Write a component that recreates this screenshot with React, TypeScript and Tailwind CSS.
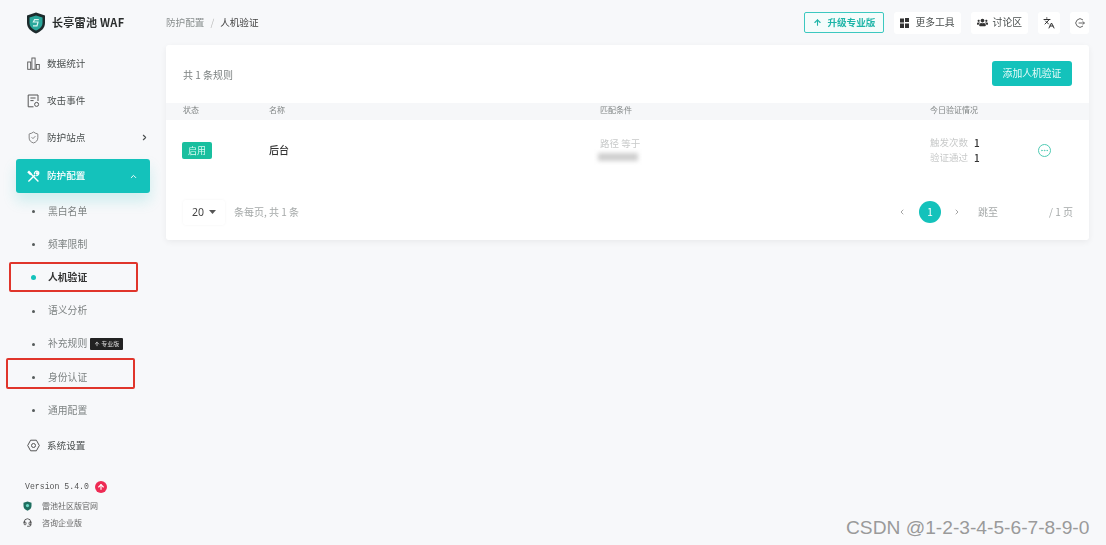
import React from 'react';
import { ChevronLeft, ChevronRight, ChevronUp, Ellipsis, Headset, Languages, ShieldCheck, ArrowUp } from 'lucide-react';
import { FaUsers } from 'react-icons/fa';

const subItems = [
  { label: '黑白名单' },
  { label: '频率限制' },
  { label: '人机验证', active: true },
  { label: '语义分析' },
  { label: '补充规则', pro: true },
  { label: '身份认证' },
  { label: '通用配置' },
];

const Logo = () => (
  <svg width="20" height="22" viewBox="0 0 20 22">
    <path d="M10 0.5 L19 3.5 V11 C19 16 15 19.5 10 21.5 C5 19.5 1 16 1 11 V3.5 Z" fill="#1d2b2c" />
    <path d="M10 3.5 L16.5 5.6 V11 C16.5 14.6 13.6 17 10 18.6 C6.4 17 3.5 14.6 3.5 11 V5.6 Z" fill="#2aa79b" />
    <path d="M12.8 7.6 H8.6 L7.4 10 H12 L11 13.8 H7" fill="none" stroke="#d9f5f1" strokeWidth="1.2" />
  </svg>
);

const BarsIcon = () => (
  <svg width="13" height="13" viewBox="0 0 13 13" fill="none" stroke="#555" strokeWidth="0.9">
    <rect x="0.7" y="5" width="3" height="7.3" />
    <rect x="4.9" y="1" width="3.2" height="11.3" />
    <rect x="9.3" y="7.5" width="3" height="4.8" />
  </svg>
);

const FileIcon = () => (
  <svg width="13" height="14" viewBox="0 0 13 14" fill="none" stroke="#555" strokeWidth="1">
    <path d="M6.5 12.8 H1.2 V1 H11 V7" />
    <path d="M3.4 4 H8.6 M3.4 6.6 H6.6" />
    <circle cx="9.6" cy="10.4" r="2" />
  </svg>
);

const ToolsIcon = () => (
  <svg width="13" height="13" viewBox="0 0 13 13" fill="none" stroke="#fff" strokeWidth="1.4">
    <path d="M1.4 11.6 L8 5" />
    <path d="M7.4 4.4 A2.6 2.6 0 0 1 11 1.4 L9.2 3.2 L10 4.2 L11.8 2.4 A2.6 2.6 0 0 1 8.6 5.6" strokeWidth="1.1" />
    <path d="M2 1.4 L4 3.4 L3.2 4.2 L1.2 2.2 Z M3.8 3.8 L11.4 11.4" />
  </svg>
);

const GearIcon = () => (
  <svg width="13" height="13" viewBox="0 0 13 13" fill="none" stroke="#555" strokeWidth="1">
    <path d="M3.6 1.2 H9.4 L12.3 6.5 L9.4 11.8 H3.6 L0.7 6.5 Z" />
    <circle cx="6.5" cy="6.5" r="2" />
  </svg>
);

const GridIcon = () => (
  <svg width="9" height="10" viewBox="0 0 9 10" fill="#333" className="mr-[6px]">
    <rect x="0" y="0.5" width="4" height="4" />
    <rect x="5" y="0" width="4" height="4" />
    <rect x="0" y="5.5" width="4" height="4.5" />
    <rect x="5" y="5.5" width="4" height="4.5" />
  </svg>
);

const ExitIcon = () => (
  <svg width="10" height="10" viewBox="0 0 10 10" fill="none" stroke="#555" strokeWidth="0.9">
    <path d="M8 2 A4.2 4.2 0 1 0 8 8" />
    <path d="M3.6 5 H9.4 M7.8 3.4 L9.4 5 L7.8 6.6" />
  </svg>
);

const NavItem = ({ icon, label, right }: { icon: React.ReactNode; label: string; right?: React.ReactNode }) => (
  <div className="flex h-[37px] items-center pl-[27px] pr-[14px] text-[#4a4f4f]">
    <span className="flex w-[20px] shrink-0">{icon}</span>
    <span className="text-[9.6px] leading-none">{label}</span>
    {right && <span className="ml-auto">{right}</span>}
  </div>
);

const Sidebar = () => (
  <aside className="flex w-[166px] shrink-0 flex-col">
    <div className="flex h-[45px] items-center gap-[6px] pl-[26px]">
      <Logo />
      <span className="text-[11px] font-bold leading-none tracking-[0.3px] text-[#2a2d2d]">长亭雷池 WAF</span>
    </div>
    <nav className="flex flex-col">
      <NavItem icon={<BarsIcon />} label="数据统计" />
      <NavItem icon={<FileIcon />} label="攻击事件" />
      <NavItem
        icon={<ShieldCheck size={13} strokeWidth={1.3} className="text-[#555]" />}
        label="防护站点"
        right={<ChevronRight size={9} strokeWidth={3} className="mr-[3px]" />}
      />
      <div className="mx-[16px] mt-[3px] flex h-[34px] items-center rounded-[3px] bg-[#14c2bb] pl-[11px] pr-[12px] text-white shadow-[0_8px_14px_rgba(20,194,187,0.18)]">
        <span className="flex w-[20px]">
          <ToolsIcon />
        </span>
        <span className="text-[9.6px] font-medium leading-none">防护配置</span>
        <ChevronUp size={9} strokeWidth={2.5} className="ml-auto" />
      </div>
      <div className="mt-[2px] flex flex-col">
        {subItems.map((item) => (
          <div key={item.label} className="flex h-[33.2px] items-center pl-[32px]">
            <span className="flex w-[16px]">
              <span
                className={
                  item.active
                    ? 'ml-[-1px] h-[5px] w-[5px] rounded-full bg-[#14c2bb]'
                    : 'h-[3px] w-[3px] rounded-full bg-[#555b5b]'
                }
              />
            </span>
            <span className={item.active ? 'text-[9.8px] font-bold leading-none text-[#333]' : 'text-[9.8px] leading-none text-[#7d8282]'}>
              {item.label}
            </span>
            {item.pro && (
              <span className="ml-[3px] flex h-[12px] w-[33px] items-center justify-center gap-[1px] rounded-[1px] bg-[#222] text-[6px] leading-none text-[#ddd]">
                <ArrowUp size={6} strokeWidth={3} />
                专业版
              </span>
            )}
          </div>
        ))}
      </div>
      <div>
        <NavItem icon={<GearIcon />} label="系统设置" />
      </div>
    </nav>
    <div className="mt-[13px] flex flex-col pl-[25px]">
      <div className="flex h-[20px] items-center gap-[6px]">
        <span className="font-['Liberation_Mono',monospace] text-[8.2px] leading-none text-[#555]">Version 5.4.0</span>
        <span className="flex h-[12px] w-[12px] items-center justify-center rounded-full bg-[#ee2b54] text-white">
          <ArrowUp size={8} strokeWidth={3.5} />
        </span>
      </div>
      <div className="ml-[-2px] flex h-[17px] items-center gap-[10px] text-[8px] leading-none text-[#666]">
        <svg width="9" height="10" viewBox="0 0 9 10">
          <path d="M4.5 0.5 L8.5 1.8 V5 C8.5 7.4 6.8 8.8 4.5 9.7 C2.2 8.8 0.5 7.4 0.5 5 V1.8 Z" fill="#1f6f60" />
          <circle cx="4.5" cy="4.6" r="1.6" fill="#6ed9c6" />
        </svg>
        雷池社区版官网
      </div>
      <div className="ml-[-2px] flex h-[17px] items-center gap-[10px] text-[8px] leading-none text-[#666]">
        <Headset size={9} strokeWidth={2} className="text-[#333]" />
        咨询企业版
      </div>
    </div>
  </aside>
);

const TopBtn = ({ children }: { children: React.ReactNode }) => (
  <div className="flex h-[22px] items-center rounded-[3px] bg-white px-[6px] text-[9.8px] leading-none text-[#4a4f4f]">{children}</div>
);

const Header = () => (
  <header className="flex h-[45px] items-center pr-[17px]">
    <div className="flex items-center text-[9.6px] leading-none">
      <span className="text-[#8a8f8f]">防护配置</span>
      <span className="mx-[6px] text-[#bbb]">/</span>
      <span className="text-[#444]">人机验证</span>
    </div>
    <div className="ml-auto flex items-center gap-[10px]">
      <div className="flex h-[21px] w-[80px] items-center justify-center gap-[5px] rounded-[2px] border border-[#3cc8c0] bg-[#f4fcfb] text-[9.6px] font-bold leading-none text-[#1fb5a8]">
        <ArrowUp size={9} strokeWidth={3} />
        升级专业版
      </div>
      <TopBtn>
        <GridIcon />
        更多工具
      </TopBtn>
      <TopBtn>
        <FaUsers size={11} className="mr-[5px] text-[#333]" />
        讨论区
      </TopBtn>
      <span className="flex h-[22px] w-[22px] items-center justify-center rounded-[3px] bg-white text-[#333]">
        <Languages size={12} strokeWidth={2} />
      </span>
      <span className="flex h-[22px] w-[19px] items-center justify-center rounded-[3px] bg-white">
        <ExitIcon />
      </span>
    </div>
  </header>
);

const RuleCard = () => (
  <section className="mr-[17px] flex h-[195px] flex-col rounded-[3px] bg-white shadow-[0_2px_6px_rgba(0,0,0,0.06)]">
    <div className="flex h-[58px] items-center justify-between pl-[17px] pr-[17px]">
      <span className="mt-[2px] text-[10px] leading-none text-[#7d8282]">共 1 条规则</span>
      <button className="mt-[-1px] flex h-[25px] w-[80px] items-center justify-center rounded-[3px] bg-[#14c2bb] text-[9.8px] leading-none text-[#e6fbf9]">
        添加人机验证
      </button>
    </div>
    <div className="flex h-[17px] items-start bg-[#f6f7f9] pt-[3px] text-[8px] leading-none text-[#808585]">
      <span className="w-[103px] pl-[17px]">状态</span>
      <span className="w-[331px]">名称</span>
      <span className="w-[330px]">匹配条件</span>
      <span>今日验证情况</span>
    </div>
    <div className="flex h-[60px] items-center">
      <span className="ml-[16px] flex h-[17px] w-[30px] items-center justify-center rounded-[2px] bg-[#19bf9f] text-[9px] leading-none text-[#d8fbf2]">
        启用
      </span>
      <span className="ml-[57px] w-[331px] text-[10px] font-medium leading-none text-[#333]">后台</span>
      <div className="flex w-[330px] flex-col gap-[5px]">
        <span className="text-[9.5px] leading-none text-[#c8caca] blur-[0.5px]">路径 等于</span>
        <span className="ml-[-2px] h-[8px] w-[40px] bg-[#cfcfcf] blur-[2px]" />
      </div>
      <div className="flex w-[108px] flex-col gap-[4px] text-[9.5px] leading-[11px] text-[#c8caca]">
        <span className="flex items-center gap-[6px]">
          <span className="blur-[0.4px]">触发次数</span>
          <span className="text-[10px] font-medium text-[#333]">1</span>
        </span>
        <span className="flex items-center gap-[6px]">
          <span className="blur-[0.4px]">验证通过</span>
          <span className="text-[10px] font-medium text-[#333]">1</span>
        </span>
      </div>
      <span className="flex h-[13px] w-[13px] items-center justify-center rounded-full border border-[#4fcbb4] text-[#4fcbb4]">
        <Ellipsis size={9} strokeWidth={2} />
      </span>
    </div>
    <div className="flex flex-1 items-center pt-[4px] pl-[17px] pr-[16px] text-[10px] leading-none text-[#a5a9a9]">
      <span className="flex h-[25px] w-[42px] items-center justify-center gap-[5px] rounded-[3px] font-['Noto_Sans',sans-serif] text-[10.5px] text-[#444] shadow-[0_0_3px_rgba(0,0,0,0.05)]">
        20
        <svg width="7" height="4" viewBox="0 0 7 4" fill="#555">
          <path d="M0 0 H7 L3.5 4 Z" />
        </svg>
      </span>
      <span className="ml-[9px]">条每页, 共 1 条</span>
      <div className="ml-auto flex items-center">
        <ChevronLeft size={8} strokeWidth={2} className="text-[#777]" />
        <span className="mx-[12px] ml-[13px] flex h-[22px] w-[22px] items-center justify-center rounded-full bg-[#14c2bb] text-[10px] text-white">1</span>
        <ChevronRight size={8} strokeWidth={2} className="text-[#777]" />
        <span className="ml-[17px]">跳至</span>
        <span className="h-[22px] w-[51px]" />
        <span>/ 1 页</span>
      </div>
    </div>
  </section>
);

export default function App() {
  return (
    <div className="relative h-[545px] w-[1106px] overflow-hidden bg-[#f7f8fa] font-['Noto_Sans_CJK_SC','Noto_Sans',sans-serif]">
      <div className="flex h-full blur-[0.3px]">
        <Sidebar />
        <main className="min-w-0 flex-1">
          <Header />
          <RuleCard />
        </main>
      </div>
      {/* annotations drawn on top of the screenshot */}
      <div className="absolute left-[9px] top-[262px] h-[30px] w-[129px] rounded-[2px] border-2 border-[#e0352b]" />
      <div className="absolute left-[6px] top-[358px] h-[31px] w-[129px] rounded-[2px] border-2 border-[#e0352b]" />
      <span className="absolute left-[846px] top-[517px] font-['Liberation_Sans',sans-serif] text-[19.2px] leading-[22px] text-[#9a9a9a]">
        CSDN @1-2-3-4-5-6-7-8-9-0
      </span>
    </div>
  );
}
